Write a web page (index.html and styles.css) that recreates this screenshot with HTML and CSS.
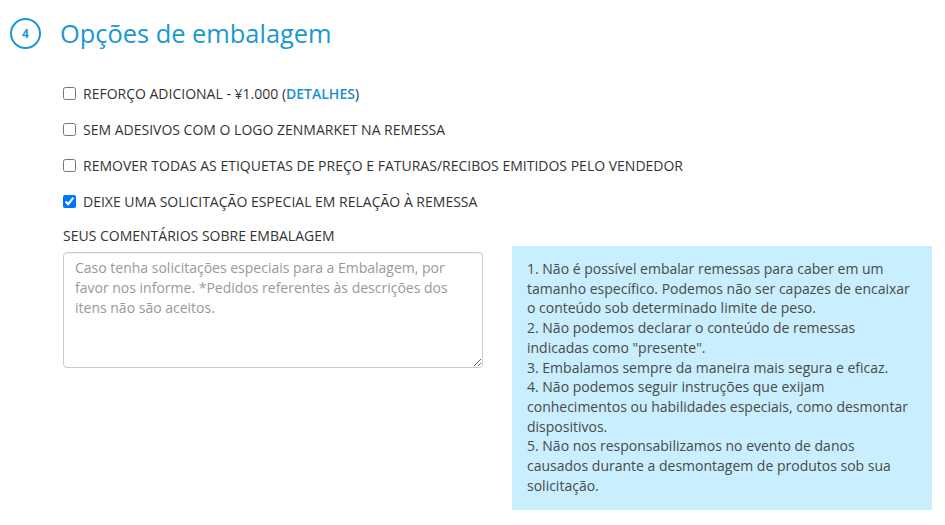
FILE: index.html
```html
<!DOCTYPE html>
<html lang="pt">
<head>
<meta charset="utf-8">
<link rel="stylesheet" href="styles.css">
</head>
<body>
<section class="step">
  <header class="step-head">
    <span class="step-num">4</span>
    <h2 class="step-title">Opções de embalagem</h2>
  </header>
  <div class="options">
    <label class="opt"><input type="checkbox"><span>REFORÇO ADICIONAL - ¥1.000 (<a class="link" href="#">DETALHES</a>)</span></label>
    <label class="opt"><input type="checkbox"><span>SEM ADESIVOS COM O LOGO ZENMARKET NA REMESSA</span></label>
    <label class="opt"><input type="checkbox"><span>REMOVER TODAS AS ETIQUETAS DE PREÇO E FATURAS/RECIBOS EMITIDOS PELO VENDEDOR</span></label>
    <label class="opt"><input type="checkbox" checked><span>DEIXE UMA SOLICITAÇÃO ESPECIAL EM RELAÇÃO À REMESSA</span></label>
  </div>
  <div class="bottom">
    <div class="comment">
      <div class="comment-label">SEUS COMENTÁRIOS SOBRE EMBALAGEM</div>
      <textarea class="comment-box" placeholder="Caso tenha solicitações especiais para a Embalagem, por favor nos informe. *Pedidos referentes às descrições dos itens não são aceitos."></textarea>
    </div>
    <div class="info">
      1. Não é possível embalar remessas para caber em um tamanho específico. Podemos não ser capazes de encaixar o conteúdo sob determinado limite de peso.<br>
      2. Não podemos declarar o conteúdo de remessas indicadas como "presente".<br>
      3. Embalamos sempre da maneira mais segura e eficaz.<br>
      4. Não podemos seguir instruções que exijam conhecimentos ou habilidades especiais, como desmontar dispositivos.<br>
      5. Não nos responsabilizamos no evento de danos causados durante a desmontagem de produtos sob sua solicitação.
    </div>
  </div>
</section>
</body>
</html>
```
FILE: styles.css
```css
html, body {
  margin: 0;
  padding: 0;
  background: #fff;
}
body {
  font-family: "Open Sans", "Liberation Sans", sans-serif;
  color: #333;
}
.step {
  padding: 18px 13px 0 10px;
}
.step-head {
  display: flex;
  align-items: center;
  height: 31px;
}
.step-num {
  box-sizing: border-box;
  width: 31px;
  height: 31px;
  border: 2px solid #1b98cf;
  border-radius: 50%;
  color: #1b98cf;
  font-size: 12px;
  font-weight: 700;
  display: flex;
  align-items: center;
  justify-content: center;
}
.step-title {
  margin: 0 0 0 19px;
  font-size: 25.4px;
  font-weight: 400;
  color: #1b98cf;
  line-height: 31px;
}
.options {
  margin-top: 34px;
  padding-left: 53px;
  display: flex;
  flex-direction: column;
  gap: 16px;
}
.opt {
  display: flex;
  align-items: center;
  height: 20px;
  font-size: 14px;
  color: #333;
}
.opt input {
  margin: 0 7px 0 0;
  width: 13px;
  height: 13px;
}
.link {
  color: #1a8fd0;
  font-weight: 600;
  text-decoration: none;
}
.bottom {
  display: flex;
  align-items: flex-start;
  padding-left: 53px;
  margin-top: 16px;
  gap: 29px;
}
.comment {
  width: 420px;
  display: flex;
  flex-direction: column;
}
.comment-label {
  font-size: 14px;
  line-height: 18px;
  color: #333;
  margin-bottom: 7px;
}
.comment-box {
  box-sizing: border-box;
  width: 420px;
  height: 116px;
  border: 1px solid #ccc;
  border-radius: 4px;
  padding: 5px 11px;
  font-family: "Open Sans", "Liberation Sans", sans-serif;
  font-size: 14px;
  line-height: 20px;
  color: #555;
  box-shadow: inset 0 1px 1px rgba(0,0,0,0.075);
  resize: both;
}
.comment-box::placeholder {
  color: #999;
}
.info {
  box-sizing: border-box;
  width: 420px;
  margin-top: 19px;
  padding: 13px 15px 15px 15px;
  background: #c9eefd;
  font-size: 14px;
  line-height: 19.7px;
  color: #4a4a4a;
}
```
